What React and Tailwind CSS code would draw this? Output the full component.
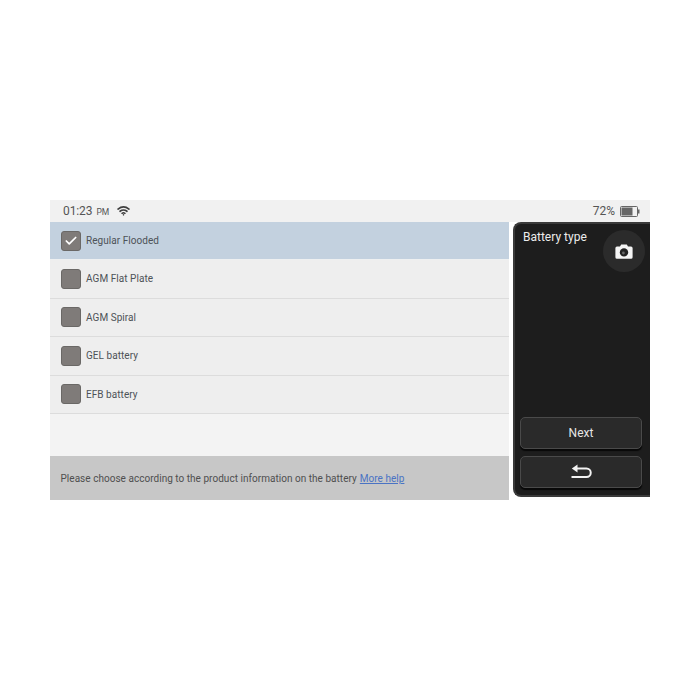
import { Check } from 'lucide-react';

const rows = [
    { label: 'Regular Flooded', checked: true },
    { label: 'AGM Flat Plate' },
    { label: 'AGM Spiral' },
    { label: 'GEL battery' },
    { label: 'EFB battery' },
];

function WifiIcon() {
    return (
        <svg width="13" height="10" viewBox="0 0 14 11" fill="none" stroke="#3f3f3f" strokeLinecap="round">
            <path d="M1 3.400C4.600 .6 9.400 .6 13 3.400" strokeWidth="1.900" />
            <path d="M3.200 5.800C5.500 4.100 8.500 4.100 10.800 5.800" strokeWidth="1.800" />
            <path d="M5.400 8C6.400 7.300 7.600 7.300 8.600 8" strokeWidth="1.700" />
            <circle cx="7" cy="9.700" r=".9" fill="#3f3f3f" stroke="none" />
        </svg>
    );
}

function BatteryIcon() {
    return (
        <svg width="20" height="11" viewBox="0 0 20 11">
            <rect x=".5" y=".5" width="17" height="10" rx="1" fill="none" stroke="#666" />
            <rect x="1.500" y="1.500" width="11" height="8" fill="#666" />
            <rect x="18" y="3.500" width="1.500" height="4" fill="#666" />
        </svg>
    );
}

function CameraIcon() {
    return (
        <svg width="18" height="15" viewBox="0 0 18 15">
            <path d="M2 2.500h3L6.200 .6h5.600L13 2.500h3A1.600 1.600 0 0 1 17.600 4v9.200a1.600 1.600 0 0 1-1.600 1.600H2A1.600 1.600 0 0 1 .4 13.200V4A1.600 1.600 0 0 1 2 2.500z" fill="#f5f5f5" />
            <circle cx="9" cy="8.400" r="4.200" fill="#222" />
            <circle cx="8.400" cy="9" r="1.400" fill="#666" />
        </svg>
    );
}

function BackIcon() {
    return (
        <svg width="22" height="16" viewBox="0 0 22 16" fill="none" stroke="#f2f2f2" strokeWidth="2">
            <path d="M7 4.500h9.500a4 4 0 0 1 0 8.500H1.500" />
            <path d="M7.500 .5v8L1.800 4.500z" fill="#f2f2f2" stroke="none" />
        </svg>
    );
}

export default function App() {
    return (
        <div className="w-[700px] h-[700px] bg-white pt-[200px] pl-[50px] font-['Roboto',sans-serif]">
            <div className="w-[600px] h-[300px] flex flex-col bg-[#f3f3f3]">
                <div className="h-[22px] shrink-0 flex items-center justify-between pl-[13px] pr-[10px] bg-[#f1f1f1] text-[#555555]">
                    <div className="flex items-center">
                        <span className="text-[12px] tracking-[-0.1px]">01:23</span>
                        <span className="text-[8.500px] ml-[4px] mt-[2px]">PM</span>
                        <span className="ml-[8px] flex"><WifiIcon /></span>
                    </div>
                    <div className="flex items-center gap-[5px]">
                        <span className="text-[12px]">72%</span>
                        <BatteryIcon />
                    </div>
                </div>

                <div className="flex-1 flex min-h-0">
                    <div className="w-[459px] flex flex-col">
                        <div className="flex-1">
                            {rows.map((row) => (
                                <div
                                    key={row.label}
                                    className={`flex items-center pl-[11px] gap-[5px] border-b ${row.checked ? 'h-[38px] bg-[#c3d1df] border-[#eef0f1]' : 'h-[38.500px] bg-[#eeeeee] border-[#dcdcdc]'}`}
                                >
                                    <div className="w-[20px] h-[20px] rounded-[3px] bg-[#7f7b79] border border-[#6a6866] flex items-center justify-center">
                                        {row.checked && <Check size={14} strokeWidth={3} color="#ffffff" />}
                                    </div>
                                    <span className="text-[10px] text-[#4d5257] tracking-[0.05px]">{row.label}</span>
                                </div>
                            ))}
                        </div>
                        <div className="h-[44px] shrink-0 flex items-center pl-[10.500px] bg-[#c7c7c7] text-[10px] text-[#4f4f4f] tracking-[0.03px]">
                            <span>Please choose according to the product information on the battery</span>
                            <a className="ml-[3px] text-[#4a73c4] underline">More help</a>
                        </div>
                    </div>

                    <div className="flex-1 pl-[4px] bg-white">
                        <div className="relative h-[275px] rounded-l-[8px] bg-[#1d1d1d] border-2 border-r-0 border-[#3a3a3a] flex flex-col">
                            <div className="pl-[8px] pt-[4px] text-[12px] text-[#ececec]">Battery type</div>
                            <div className="absolute top-[6px] right-[5px] w-[42px] h-[42px] rounded-full bg-[#2b2b2b] flex items-center justify-center">
                                <CameraIcon />
                            </div>
                            <div className="mt-auto flex flex-col gap-[7px] pl-[5px] pr-[8px] pb-[7px]">
                                <div className="h-[32px] rounded-[5px] bg-[#2a2a2a] border border-[#4a4a4a] shadow-[0_2px_1px_#080808] flex items-center justify-center text-[12px] text-[#e6e6e6]">
                                    Next
                                </div>
                                <div className="h-[32px] rounded-[5px] bg-[#2a2a2a] border border-[#4a4a4a] shadow-[0_2px_1px_#080808] flex items-center justify-center">
                                    <BackIcon />
                                </div>
                            </div>
                        </div>
                    </div>
                </div>
            </div>
        </div>
    );
}
